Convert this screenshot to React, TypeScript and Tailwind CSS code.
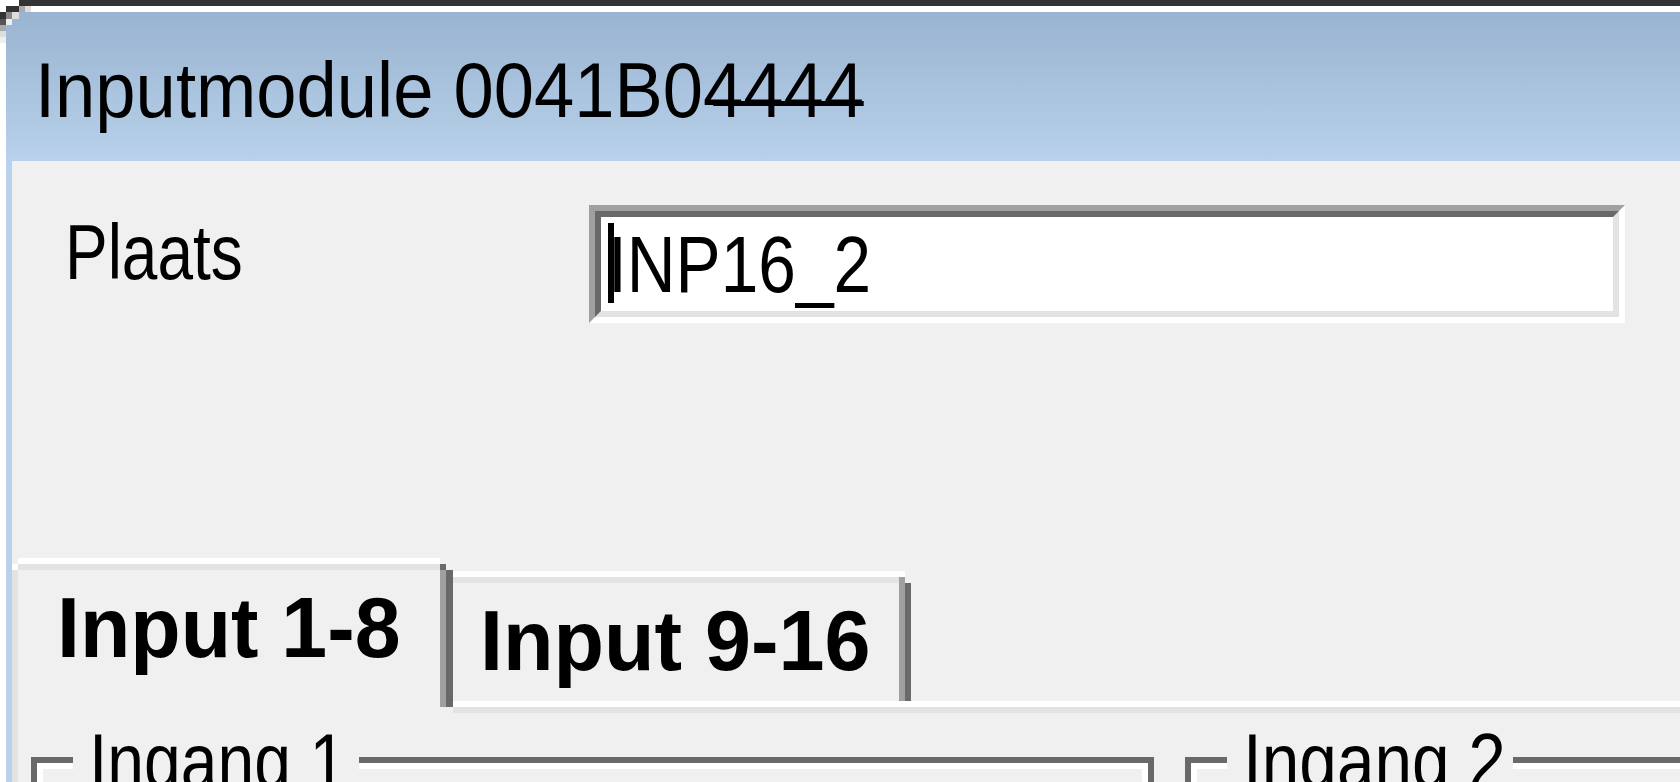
export default function App() {
  return (
    <div className="relative w-[1680px] h-[782px] overflow-hidden bg-white font-['Liberation_Sans',Arial,sans-serif] text-black">
      <div className="h-[6px] ml-[19px] bg-[#333333]" />
      <div className="h-[6px]" />
      <div className="ml-[6px] flex flex-col h-[770px]">
        {/* caption */}
        <div className="h-[149px] shrink-0 bg-linear-to-b from-[#99b4d1] to-[#b9d1ea] pl-[29px] pt-[39px]">
          <div className="inline-block origin-left scale-x-[0.928] text-[78px] leading-none whitespace-nowrap">
            Inputmodule 0041B0
            <span className="relative after:absolute after:left-[11px] after:right-0 after:bottom-[28px] after:h-[5px] after:bg-black after:content-['']">4444</span>
          </div>
        </div>

        {/* client area */}
        <div className="flex-1 flex flex-col border-l-[6px] border-[#b9d1ea] bg-[#f0f0f0]">
          <div className="flex shrink-0 h-[118px] mt-[44px] pl-[53px]">
            <div className="w-[524px] shrink-0 pt-[8px]">
              <span className="inline-block origin-left scale-x-[0.82] text-[78px] leading-none">Plaats</span>
            </div>
            <div className="w-[1036px] h-[118px] shrink-0 border-[6px] border-t-[#a0a0a0] border-l-[#a0a0a0] border-r-white border-b-white">
              <div className="relative h-full border-[6px] border-t-[#696969] border-l-[#696969] border-r-[#e3e3e3] border-b-[#e3e3e3] bg-white pl-[7px] pt-[8px]">
                <span className="absolute left-[7px] top-[6px] w-[6px] h-[80px] bg-black" />
                <span className="inline-block origin-left scale-x-[0.845] text-[80px] leading-none whitespace-nowrap">INP16_2</span>
              </div>
            </div>
          </div>

          {/* tabs */}
          <div className="flex shrink-0 h-[149px] mt-[235px]">
            <div className="w-[441px] shrink-0 flex flex-col">
              <div className="h-[6px] ml-[6px] w-[422px] bg-white" />
              <div className="h-[6px] flex">
                <div className="w-[6px] bg-white" />
                <div className="w-[422px] bg-[#e3e3e3]" />
                <div className="w-[6px] bg-[#696969]" />
              </div>
              <div className="flex-1 flex">
                <div className="w-[6px] bg-[#e3e3e3]" />
                <div className="w-[422px] pl-[39px] pt-[15px]">
                  <span className="inline-block origin-left scale-x-[0.97] text-[85px] font-bold leading-none whitespace-nowrap">Input 1-8</span>
                </div>
                <div className="w-[6px] bg-[#a0a0a0]" />
                <div className="w-[7px] bg-[#696969]" />
              </div>
            </div>
            <div className="flex-1 flex flex-col">
              <div className="h-[143px] flex">
                <div className="mt-[13px] w-[458px] flex flex-col">
                  <div className="h-[6px] w-[452px] bg-white" />
                  <div className="h-[6px] flex">
                    <div className="w-[446px] bg-[#e3e3e3]" />
                    <div className="w-[6px] bg-[#a0a0a0]" />
                  </div>
                  <div className="flex-1 flex">
                    <div className="w-[446px] pl-[27px] pt-[15px]">
                      <span className="inline-block origin-left scale-x-[0.973] text-[85px] font-bold leading-none whitespace-nowrap">Input 9-16</span>
                    </div>
                    <div className="w-[6px] bg-[#a0a0a0]" />
                    <div className="w-[6px] bg-[#696969]" />
                  </div>
                </div>
              </div>
              <div className="h-[6px] bg-white" />
            </div>
          </div>

          {/* tab page */}
          <div className="flex-1 flex flex-col border-l-[6px] border-[#e3e3e3]">
            <div className="h-[6px] flex shrink-0">
              <div className="w-[435px]" />
              <div className="flex-1 bg-[#e3e3e3]" />
            </div>
            <div className="flex gap-[31px] mt-[44px] ml-[13px]">
              <GroupBox label="Ingang 1" textClass="scale-x-[0.847]" />
              <GroupBox label="Ingang 2" textClass="scale-x-[0.866]" />
            </div>
          </div>
        </div>
      </div>
      <Corner />
    </div>
  )
}

function GroupBox({ label, textClass }: { label: string; textClass: string }) {
  return (
    <div className="relative shrink-0 w-[1123px] h-[200px]">
      <div className="h-full border-[6px] border-b-0 border-[#696969]">
        <div className="h-full border-[6px] border-b-0 border-white" />
      </div>
      <div className="absolute top-[-35px] left-[42px] w-[286px] h-[78px] bg-[#f0f0f0] pl-[16px]">
        <span className={`inline-block origin-left text-[78px] leading-none whitespace-nowrap ${textClass}`}>{label}</span>
      </div>
    </div>
  )
}

function Corner() {
  return (
    <svg className="absolute left-0 top-0" width="31" height="43" viewBox="0 0 31 43" shapeRendering="crispEdges">
      <rect x="6" y="6" width="13" height="6" fill="#333" />
      <rect x="19" y="6" width="6" height="6" fill="#aaa" />
      <rect x="25" y="6" width="6" height="6" fill="#ddd" />
      <rect x="0" y="12" width="6" height="7" fill="#333" />
      <rect x="6" y="12" width="6" height="7" fill="#888" />
      <rect x="12" y="12" width="7" height="7" fill="#ddd" />
      <rect x="0" y="19" width="6" height="6" fill="#555" />
      <rect x="6" y="19" width="6" height="6" fill="#eee" />
      <rect x="0" y="25" width="6" height="6" fill="#aaa" />
      <rect x="0" y="31" width="6" height="6" fill="#ddd" />
      <rect x="0" y="37" width="6" height="6" fill="#eee" />
    </svg>
  )
}
